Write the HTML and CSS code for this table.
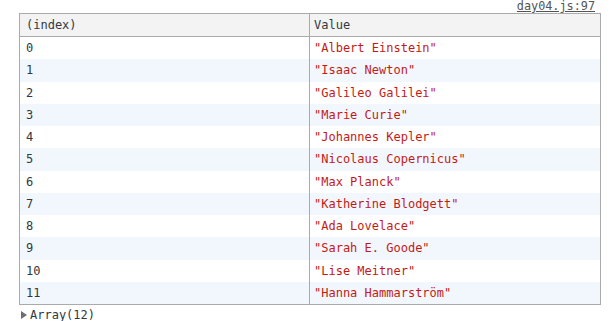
FILE: index.html
```html
<!DOCTYPE html>
<html>
<head>
<meta charset="utf-8">
<title>console.table</title>
<link rel="stylesheet" href="styles.css">
</head>
<body>
<div class="console">
  <div class="source"><a href="#">day04.js:97</a></div>
  <table class="tbl">
    <thead>
      <tr><th class="idx">(index)</th><th>Value</th></tr>
    </thead>
    <tbody>
      <tr><td class="idx">0</td><td class="str">"Albert Einstein"</td></tr>
      <tr><td class="idx">1</td><td class="str">"Isaac Newton"</td></tr>
      <tr><td class="idx">2</td><td class="str">"Galileo Galilei"</td></tr>
      <tr><td class="idx">3</td><td class="str">"Marie Curie"</td></tr>
      <tr><td class="idx">4</td><td class="str">"Johannes Kepler"</td></tr>
      <tr><td class="idx">5</td><td class="str">"Nicolaus Copernicus"</td></tr>
      <tr><td class="idx">6</td><td class="str">"Max Planck"</td></tr>
      <tr><td class="idx">7</td><td class="str">"Katherine Blodgett"</td></tr>
      <tr><td class="idx">8</td><td class="str">"Ada Lovelace"</td></tr>
      <tr><td class="idx">9</td><td class="str">"Sarah E. Goode"</td></tr>
      <tr><td class="idx">10</td><td class="str">"Lise Meitner"</td></tr>
      <tr><td class="idx">11</td><td class="str">"Hanna Hammarström"</td></tr>
    </tbody>
  </table>
  <div class="summary"><span class="arrow"></span>Array(12)</div>
</div>
</body>
</html>
```
FILE: styles.css
```css
body {
  margin: 0;
  background: #fff;
}

.console {
  font-family: "DejaVu Sans Mono", "Liberation Mono", monospace;
  font-size: 12px;
  color: #303942;
  padding: 0 14px 0 19px;
}

.source {
  height: 13px;
  text-align: right;
  padding-right: 6px;
  line-height: 13px;
  font-size: 11.8px;
}

.source a {
  color: #545454;
  text-decoration: underline;
}

.tbl {
  width: 582px;
  border-collapse: collapse;
  border: 1px solid #aaa;
  table-layout: fixed;
}

.tbl th,
.tbl td {
  text-align: left;
  font-weight: normal;
  padding: 0 4px;
  white-space: nowrap;
}

.tbl th {
  height: 22px;
  background: #f3f3f3;
  border-bottom: 1px solid #aaa;
}

.tbl td {
  height: 22.25px;
}

.tbl .idx {
  width: 279px;
  border-right: 1px solid #aaa;
  padding-left: 6px;
}

.tbl tbody tr:nth-child(even) {
  background: #f2f7fd;
}

.str {
  color: #c41a16;
}

.summary {
  display: flex;
  align-items: center;
  gap: 3px;
  height: 20px;
  padding-left: 2px;
}

.arrow {
  width: 0;
  height: 0;
  border-top: 4px solid transparent;
  border-bottom: 4px solid transparent;
  border-left: 6px solid #6e6e6e;
}
```
